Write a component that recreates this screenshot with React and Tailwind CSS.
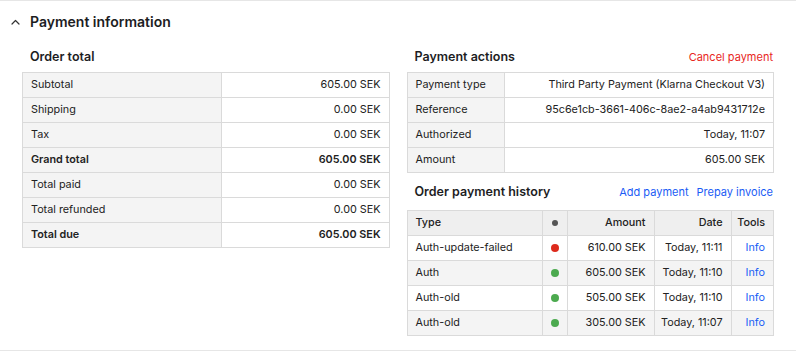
const orderTotals = [
  { label: 'Subtotal', value: '605.00 SEK' },
  { label: 'Shipping', value: '0.00 SEK' },
  { label: 'Tax', value: '0.00 SEK' },
  { label: 'Grand total', value: '605.00 SEK', bold: true },
  { label: 'Total paid', value: '0.00 SEK' },
  { label: 'Total refunded', value: '0.00 SEK' },
  { label: 'Total due', value: '605.00 SEK', bold: true },
];

const paymentActions = [
  { label: 'Payment type', value: 'Third Party Payment (Klarna Checkout V3)' },
  { label: 'Reference', value: '95c6e1cb-3661-406c-8ae2-a4ab9431712e' },
  { label: 'Authorized', value: 'Today, 11:07' },
  { label: 'Amount', value: '605.00 SEK' },
];

const history = [
  { type: 'Auth-update-failed', ok: false, amount: '610.00 SEK', date: 'Today, 11:11' },
  { type: 'Auth', ok: true, amount: '605.00 SEK', date: 'Today, 11:10' },
  { type: 'Auth-old', ok: true, amount: '505.00 SEK', date: 'Today, 11:10' },
  { type: 'Auth-old', ok: true, amount: '305.00 SEK', date: 'Today, 11:07' },
];

const KeyValueTable = ({ rows, labelWidth }) => (
  <table className="w-full border-collapse text-[10.8px] text-[#222]">
    <tbody>
      {rows.map((row) => (
        <tr key={row.label} className="h-[25px]">
          <td
            className={`border border-[#dadada] bg-[#f4f4f4] pl-2 ${labelWidth} ${row.bold ? 'font-semibold' : ''}`}
          >
            {row.label}
          </td>
          <td className={`border border-[#dadada] pr-2 text-right ${row.bold ? 'font-semibold' : ''}`}>
            {row.value}
          </td>
        </tr>
      ))}
    </tbody>
  </table>
);

const Dot = ({ color, size = 'h-[8px] w-[8px]' }) => (
  <span className={`inline-block rounded-full align-middle ${size} ${color}`} />
);

export default function App() {
  return (
    <div
      className="h-[352px] w-[796px] bg-white text-[#1d1d1f]"
      style={{ fontFamily: 'Inter, "Noto Sans", sans-serif' }}
    >
      <div className="h-[351px] border-y border-[#e6e6e6]">
        <div className="flex h-[41px] items-center pl-[11px]">
          <svg width="9" height="6" viewBox="0 0 9 6" fill="none" className="text-[#333]">
            <path d="M1 5 L4.5 1.5 L8 5" stroke="currentColor" strokeWidth="1.2" strokeLinecap="round" strokeLinejoin="round" />
          </svg>
          <h2 className="ml-[10px] text-[14px] font-semibold">Payment information</h2>
        </div>

        <div className="grid grid-cols-2 gap-[17px] px-[22px]">
          <div>
            <div className="flex h-[30px] items-center pl-2">
              <h3 className="text-[12.5px] font-semibold">Order total</h3>
            </div>
            <KeyValueTable rows={orderTotals} labelWidth="w-[199px]" />
          </div>

          <div>
            <div className="flex h-[30px] items-center justify-between pl-2 pr-[1px]">
              <h3 className="text-[12.5px] font-semibold">Payment actions</h3>
              <a className="text-[11px] text-[#e8261d]">Cancel payment</a>
            </div>
            <KeyValueTable rows={paymentActions} labelWidth="w-[97px]" />

            <div className="flex h-[37px] items-center justify-between pl-2 pr-[1px] pt-[2px]">
              <h3 className="text-[12.5px] font-semibold">Order payment history</h3>
              <div className="flex gap-2 text-[11px] text-[#1a5cf5]">
                <a>Add payment</a>
                <a>Prepay invoice</a>
              </div>
            </div>
            <table className="w-full border-collapse text-[10.8px] text-[#222]">
              <thead>
                <tr className="h-[25px] bg-[#efefef]">
                  <th className="w-[135px] border border-[#dadada] pl-2 text-left font-medium">Type</th>
                  <th className="w-[25px] border border-[#dadada] text-center font-medium">
                    <Dot color="bg-[#555]" size="h-[6px] w-[6px]" />
                  </th>
                  <th className="w-[87px] border border-[#dadada] pr-2 text-right font-medium">Amount</th>
                  <th className="w-[77px] border border-[#dadada] pr-2 text-right font-medium">Date</th>
                  <th className="border border-[#dadada] pr-2 text-right font-medium">Tools</th>
                </tr>
              </thead>
              <tbody>
                {history.map((row, i) => (
                  <tr key={i} className={`h-[25px] ${i % 2 === 1 ? 'bg-[#f4f4f4]' : 'bg-white'}`}>
                    <td className="border border-[#dadada] pl-2">{row.type}</td>
                    <td className="border border-[#dadada] text-center">
                      <Dot color={row.ok ? 'bg-[#4caa4f]' : 'bg-[#dd2a1c]'} />
                    </td>
                    <td className="border border-[#dadada] pr-2 text-right">{row.amount}</td>
                    <td className="border border-[#dadada] pr-2 text-right">{row.date}</td>
                    <td className="border border-[#dadada] pr-2 text-right text-[#1a5cf5]">Info</td>
                  </tr>
                ))}
              </tbody>
            </table>
          </div>
        </div>
      </div>
    </div>
  );
}
